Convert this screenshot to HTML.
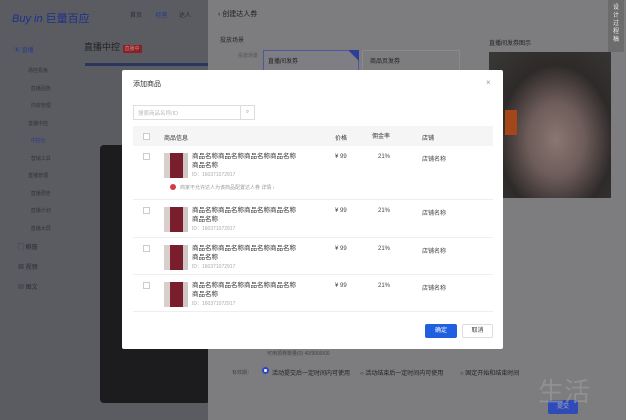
<!DOCTYPE html>
<html><head><meta charset="utf-8"><style>
*{margin:0;padding:0;box-sizing:border-box}
body{width:626px;height:420px;overflow:hidden;position:relative;background:#55575d;font-family:"Liberation Sans","Noto Sans CJK SC",sans-serif;font-size:7px;color:#333}
.a{position:absolute}
.gt{color:#9a9ca4}
.row{position:absolute;left:133px;width:360px;border-bottom:1px solid #eee}
.cb{position:absolute;left:10px;width:7px;height:7px;border:1px solid #ccc;background:#fff}
.img{position:absolute;left:31px;width:24px;height:25px;background:linear-gradient(90deg,#d8cfcc 0 25%,#7a1e2e 25% 80%,#cfc7c3 80%)}
.nm{position:absolute;left:59px;width:110px;font-size:6.5px;line-height:9px;color:#333}
.id{position:absolute;left:59px;font-size:5px;color:#aaa}
.c{position:absolute;font-size:6px;color:#444}
</style></head><body>
<!-- left app -->
<div class="a" style="left:0;top:0;width:210px;height:420px;background:#5a5c62"></div>
<div class="a" style="left:12px;top:10px;font-size:11px;color:#1e2f8a;font-style:italic">Buy in <span style="font-style:normal">巨量百应</span></div>
<div class="a" style="left:130px;top:10px;font-size:6px;color:#2a2c33">首页&nbsp;&nbsp;&nbsp;&nbsp;&nbsp;&nbsp;&nbsp;&nbsp;<span style="color:#2a3a8a">经营</span>&nbsp;&nbsp;&nbsp;&nbsp;&nbsp;&nbsp;&nbsp;达人</div>
<div class="a" style="left:84px;top:40px;font-size:9px;color:#222">直播中控 <span style="background:#8a1f26;color:#c88;font-size:5px;padding:1px 2px">直播中</span></div>
<div class="a" style="left:14px;top:45px;font-size:6px;color:#2a3a8a">▣ 直播</div>
<div class="a" style="left:28px;top:63px;font-size:5px;color:#333;line-height:17.5px">场控看板<br>&nbsp;&nbsp;直播回放<br>&nbsp;&nbsp;内容管理<br>直播中控<br><span style="color:#2a3a8a">&nbsp;&nbsp;中控台</span><br>&nbsp;&nbsp;营销工具<br>直播管理<br>&nbsp;&nbsp;直播预告<br>&nbsp;&nbsp;直播计划<br>&nbsp;&nbsp;直播大屏</div>
<div class="a" style="left:18px;top:238px;font-size:6px;color:#2a2c33;line-height:20px">▢ 橱窗<br>▦ 视频<br>▤ 图文</div>
<div class="a" style="left:85px;top:63px;width:125px;height:3px;background:#2a3560"></div>
<div class="a" style="left:100px;top:145px;width:110px;height:258px;background:#1c1c1e;border-radius:4px"></div>
<!-- drawer -->
<div class="a" style="left:208px;top:0;width:418px;height:420px;background:#7d7d7f"></div>
<div class="a" style="left:218px;top:9px;font-size:7px;color:#222">‹ 创建达人券</div>
<div class="a" style="left:220px;top:35px;font-size:6px;color:#2a2a2a">投放场景</div>
<div class="a" style="left:238px;top:52px;font-size:5px;color:#555">投放场景</div>
<div class="a" style="left:263px;top:50px;width:96px;height:22px;border:1px solid #4a5a9a;background:#7e7e84"></div>
<div class="a" style="left:268px;top:56px;font-size:6px;color:#222">直播间发券</div>
<div class="a" style="left:348px;top:50px;width:0;height:0;border-top:11px solid #2c3f98;border-left:11px solid transparent"></div>
<div class="a" style="left:362px;top:50px;width:98px;height:22px;border:1px solid #8a8a8a"></div>
<div class="a" style="left:370px;top:56px;font-size:6px;color:#222">商品页发券</div>
<div class="a" style="left:489px;top:38px;font-size:6px;color:#222">直播间发券图示</div>
<div class="a" style="left:489px;top:52px;width:122px;height:146px;background:radial-gradient(ellipse at 55% 60%,#8a7672 0,#6d5c59 30%,#2e2a2a 60%,#3b3838 100%)"></div>
<div class="a" style="left:505px;top:110px;width:12px;height:25px;background:#a4461a"></div>
<div class="a" style="left:608px;top:0;width:16px;height:52px;background:#6c6c6c;color:#eee;font-size:6px;line-height:8px;text-align:center;padding-top:4px">设<br>计<br>过<br>程<br>稿</div>
<div class="a gt" style="left:267px;top:350px;font-size:5px;color:#444">可用领券数量(0) 40/9999/00</div>
<div class="a" style="left:232px;top:369px;font-size:5px;color:#444">有效期：</div>
<div class="a" style="left:262px;top:367px;width:7px;height:7px;border-radius:50%;border:2px solid #2a46c8;background:#fff"></div>
<div class="a" style="left:272px;top:368px;font-size:6px;color:#222">活动提交后一定时间内可使用</div>
<div class="a" style="left:360px;top:368px;font-size:6px;color:#222">○ 活动结束后一定时间内可使用</div>
<div class="a" style="left:460px;top:368px;font-size:6px;color:#222">○ 固定开始和结束时间</div>
<div class="a" style="left:548px;top:400px;width:30px;height:14px;background:#2e4bb8;border-radius:2px;color:#aab;font-size:6px;text-align:center;line-height:14px">提交</div>
<div class="a" style="left:538px;top:372px;font-size:26px;color:#999;opacity:.7">生活</div>
<!-- modal -->
<div class="a" style="left:122px;top:70px;width:381px;height:279px;background:#fff;border-radius:2px"></div>
<div class="a" style="left:133px;top:79px;font-size:7px;color:#333">添加商品</div>
<div class="a" style="left:486px;top:78px;font-size:8px;color:#999">×</div>
<div class="a" style="left:133px;top:105px;width:108px;height:15px;border:1px solid #ddd"></div>
<div class="a" style="left:138px;top:109px;font-size:5.5px;color:#bbb">搜索商品名称/ID</div>
<div class="a" style="left:240px;top:105px;width:15px;height:15px;border:1px solid #ddd;font-size:6px;color:#999;text-align:center;line-height:13px">⌕</div>
<div class="a" style="left:133px;top:126px;width:360px;height:20px;background:#f5f5f6"></div>
<div class="cb" style="left:143px;top:133px"></div>
<div class="a" style="left:164px;top:133px;font-size:6px;color:#333">商品信息</div>
<div class="a" style="left:335px;top:133px;font-size:6px;color:#333">价格</div>
<div class="a" style="left:372px;top:131px;font-size:6px;color:#333">佣金率</div>
<div class="a" style="left:422px;top:133px;font-size:6px;color:#333">店铺</div>

<div class="row" style="top:146px;height:54px">
 <div class="cb" style="top:7px"></div><div class="img" style="top:7px"></div>
 <div class="nm" style="top:6px">商品名称商品名称商品名称商品名称<br>商品名称</div><div class="id" style="top:25px">ID：160371072917</div>
 <div class="c" style="left:202px;top:8px">¥ 99</div><div class="c" style="left:245px;top:8px">21%</div><div class="c" style="left:289px;top:8px">店铺名称</div>
 <div class="a" style="left:37px;top:38px;width:6px;height:6px;border-radius:50%;background:#d43a4a"></div>
 <div class="a" style="left:47px;top:38px;font-size:5px;color:#999">商家不允许达人为该商品配置达人券 详情 ›</div>
</div>
<div class="row" style="top:200px;height:38px">
 <div class="cb" style="top:7px"></div><div class="img" style="top:7px"></div>
 <div class="nm" style="top:6px">商品名称商品名称商品名称商品名称<br>商品名称</div><div class="id" style="top:25px">ID：160371072917</div>
 <div class="c" style="left:202px;top:8px">¥ 99</div><div class="c" style="left:245px;top:8px">21%</div><div class="c" style="left:289px;top:8px">店铺名称</div>
</div>
<div class="row" style="top:238px;height:37px">
 <div class="cb" style="top:7px"></div><div class="img" style="top:7px"></div>
 <div class="nm" style="top:6px">商品名称商品名称商品名称商品名称<br>商品名称</div><div class="id" style="top:25px">ID：160371072917</div>
 <div class="c" style="left:202px;top:8px">¥ 99</div><div class="c" style="left:245px;top:8px">21%</div><div class="c" style="left:289px;top:8px">店铺名称</div>
</div>
<div class="row" style="top:275px;height:37px">
 <div class="cb" style="top:7px"></div><div class="img" style="top:7px"></div>
 <div class="nm" style="top:6px">商品名称商品名称商品名称商品名称<br>商品名称</div><div class="id" style="top:25px">ID：160371072917</div>
 <div class="c" style="left:202px;top:8px">¥ 99</div><div class="c" style="left:245px;top:8px">21%</div><div class="c" style="left:289px;top:8px">店铺名称</div>
</div>
<div class="a" style="left:425px;top:324px;width:32px;height:14px;background:#1f5fe0;border-radius:2px;color:#fff;font-size:6px;text-align:center;line-height:14px">确定</div>
<div class="a" style="left:462px;top:324px;width:31px;height:14px;border:1px solid #ddd;border-radius:2px;color:#333;font-size:6px;text-align:center;line-height:12px">取消</div>
</body></html>
